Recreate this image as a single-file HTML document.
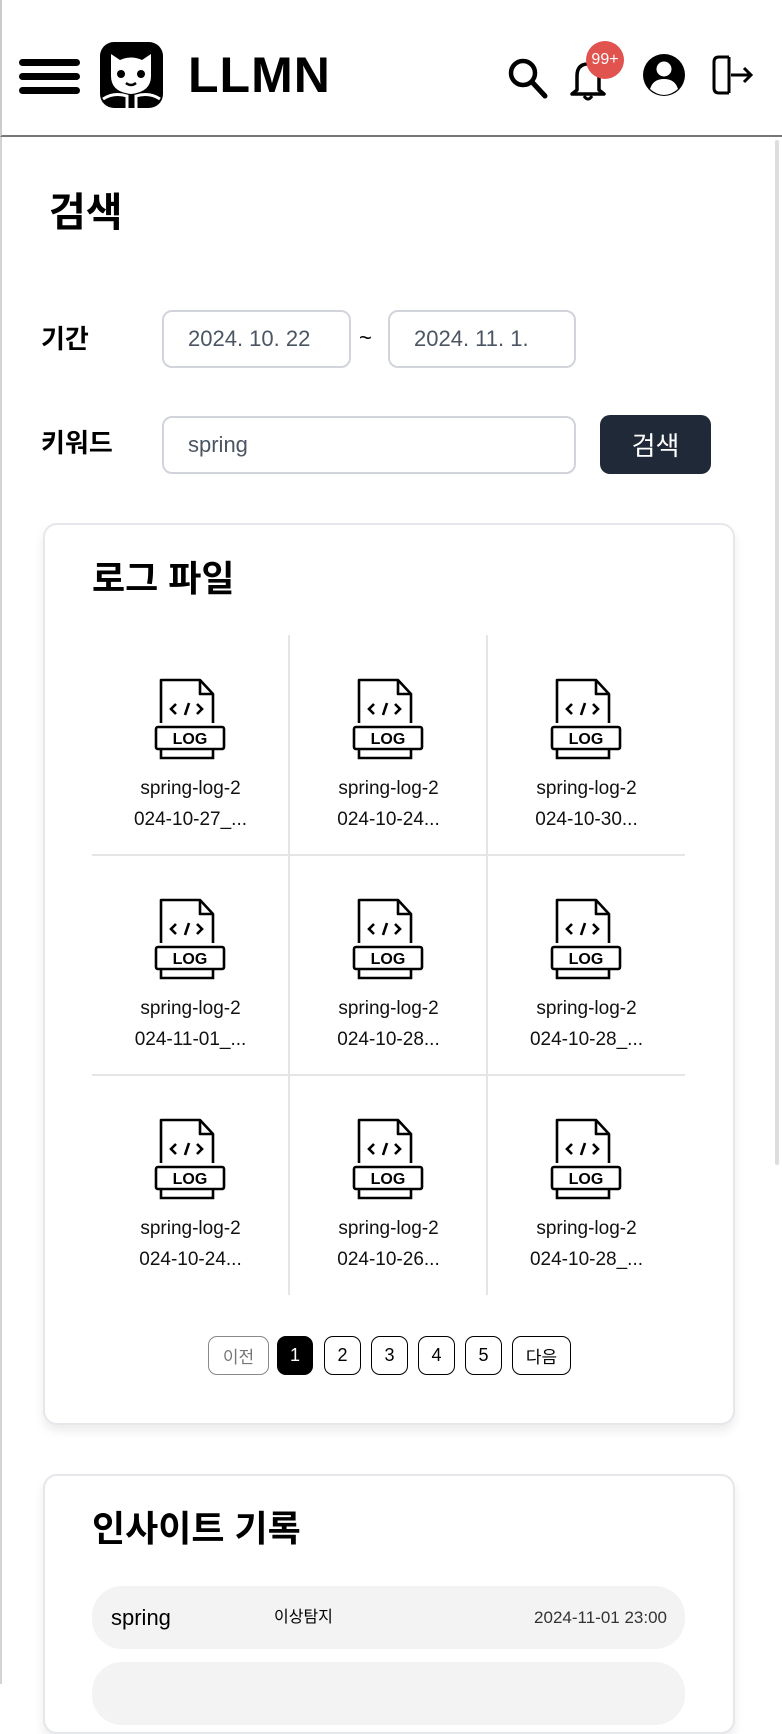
<!DOCTYPE html>
<html><head><meta charset="utf-8"><style>
*{box-sizing:border-box;margin:0;padding:0}
body{width:782px;height:1684px;overflow:hidden;background:#fff;font-family:"Liberation Sans","Noto Sans CJK KR",sans-serif;position:relative;color:#000}
.abs{position:absolute}
.hdr{position:absolute;left:0;top:0;width:782px;height:137px;border-bottom:2px solid #777;border-left:2px solid #ccc}
.lb{position:absolute;left:0;top:137px;width:2px;height:1547px;background:#d4d4d4}
.inp{position:absolute;border:2px solid #d1d5db;border-radius:10px;font-size:22px;color:#4b5563;padding-left:24px;display:flex;align-items:center;background:#fff}
.card{position:absolute;left:43px;width:692px;border:2px solid #e5e7eb;border-radius:14px;box-shadow:0 6px 10px rgba(0,0,0,.08);background:#fff}
.cell{position:absolute;width:197px;height:220px;text-align:center}
.cell svg{position:absolute;left:62px;top:42px}
.cell .t{position:absolute;left:0;width:100%;top:138px;font-size:19px;line-height:31px;color:#111}
.pg{position:absolute;top:1336px;height:39px;border:1px solid #000;border-radius:9px;font-size:18px;display:flex;align-items:center;justify-content:center;background:#fff}
</style></head><body>
<div class="hdr"></div>
<div class="lb"></div>
<div class="abs" style="left:775px;top:140px;width:4px;height:1025px;background:#ddd;border-radius:2px"></div>
<!-- hamburger -->
<div class="abs" style="left:19px;top:59px;width:61px;height:7px;background:#000;border-radius:4px"></div>
<div class="abs" style="left:19px;top:73px;width:61px;height:7px;background:#000;border-radius:4px"></div>
<div class="abs" style="left:19px;top:87px;width:61px;height:7px;background:#000;border-radius:4px"></div>
<!-- logo -->
<svg class="abs" style="left:100px;top:42px" width="63" height="66" viewBox="0 0 63 66">
<rect x="0" y="0" width="63" height="66" rx="14" fill="#000"/>
<path d="M11 12 L20 18 Q31 13 42 18 L51 12 L51 34 Q51 50 31 52 Q11 50 11 34 Z" fill="#fff"/>
<circle cx="21" cy="32" r="4" fill="#000"/><circle cx="41" cy="32" r="4" fill="#000"/>
<path d="M26 41 Q31 45 36 41" stroke="#000" stroke-width="2.5" fill="none"/>
<path d="M3 57 Q14 50 27 54 L27 66 M60 57 Q49 50 36 54 L36 66" stroke="#fff" stroke-width="3" fill="none"/>
</svg>
<div class="abs" style="left:188px;top:42px;font-size:50px;font-weight:bold;line-height:66px;letter-spacing:1px">LLMN</div>
<!-- search -->
<svg class="abs" style="left:506px;top:56px" width="44" height="44" viewBox="0 0 44 44"><circle cx="17" cy="17" r="12" stroke="#000" stroke-width="4.5" fill="none"/><path d="M26 26 L39 40" stroke="#000" stroke-width="5" stroke-linecap="round"/></svg>
<!-- bell -->
<svg class="abs" style="left:568px;top:56px" width="44" height="46" viewBox="0 0 44 46"><path d="M9 34 L9 20 Q9 8 20 8 Q31 8 31 20 L31 34 L36 38 L4 38 Z" stroke="#000" stroke-width="3.5" fill="none" stroke-linejoin="round"/><path d="M16 40 Q20 46 24 40" stroke="#000" stroke-width="3" fill="none"/></svg>
<div class="abs" style="left:586px;top:41px;width:38px;height:38px;border-radius:50%;background:#e0534f;color:#fff;font-size:16px;display:flex;align-items:center;justify-content:center">99+</div>
<!-- profile -->
<svg class="abs" style="left:641px;top:52px" width="46" height="46" viewBox="0 0 46 46"><circle cx="23" cy="23" r="21" fill="#000"/><circle cx="23" cy="17" r="7.5" fill="#fff"/><path d="M9 37 Q12 27 23 27 Q34 27 37 37 Q30 43 23 43 Q16 43 9 37 Z" fill="#fff"/></svg>
<!-- logout -->
<svg class="abs" style="left:711px;top:54px" width="44" height="42" viewBox="0 0 44 42"><path d="M18 3 L8 3 Q3 3 3 8 L3 34 Q3 39 8 39 L18 39" stroke="#000" stroke-width="3" fill="none"/><path d="M18 3 L18 39" stroke="#000" stroke-width="3"/><path d="M20 21 L40 21 M33 14 L40 21 L33 28" stroke="#000" stroke-width="3" fill="none"/></svg>

<div class="abs" style="left:49px;top:188px;font-size:40px;font-weight:bold;line-height:50px">검색</div>
<div class="abs" style="left:41px;top:323px;font-size:26px;font-weight:bold;line-height:32px">기간</div>
<div class="inp" style="left:162px;top:310px;width:189px;height:58px">2024. 10. 22</div>
<div class="abs" style="left:359px;top:325px;font-size:22px">~</div>
<div class="inp" style="left:388px;top:310px;width:188px;height:58px">2024. 11. 1.</div>
<div class="abs" style="left:41px;top:427px;font-size:26px;font-weight:bold;line-height:32px">키워드</div>
<div class="inp" style="left:162px;top:416px;width:414px;height:58px">spring</div>
<div class="abs" style="left:600px;top:415px;width:111px;height:59px;background:#1f2937;border-radius:10px;color:#fff;font-size:26px;display:flex;align-items:center;justify-content:center">검색</div>

<div class="card" style="top:523px;height:902px"></div>
<div class="abs" style="left:92px;top:556px;font-size:36px;font-weight:bold;line-height:46px">로그 파일</div>
<div class="abs" style="left:92px;top:854px;width:593px;height:2px;background:#e5e5e5"></div>
<div class="abs" style="left:92px;top:1074px;width:593px;height:2px;background:#e5e5e5"></div>
<div class="abs" style="left:288px;top:635px;width:2px;height:660px;background:#e5e5e5"></div>
<div class="abs" style="left:486px;top:635px;width:2px;height:660px;background:#e5e5e5"></div>

<svg width="0" height="0" style="position:absolute"><defs><g id="ic">
<path d="M7 46 L7 3 L46 3 L59 17 L59 46" stroke="#000" stroke-width="2.6" fill="none" stroke-linejoin="round"/>
<path d="M46 3 L46 17 L59 17" stroke="#000" stroke-width="2.6" fill="none" stroke-linejoin="round"/>
<path d="M22 27 L17 32 L22 37 M31 38 L35 26 M43 27 L48 32 L43 37" stroke="#000" stroke-width="2.6" fill="none"/>
<rect x="2" y="50" width="68" height="22" rx="2" stroke="#000" stroke-width="2.6" fill="none"/>
<path d="M7 72 L7 81 L59 81 L59 72" stroke="#000" stroke-width="2.6" fill="none"/>
<text x="36" y="67" text-anchor="middle" font-family="Liberation Sans,sans-serif" font-weight="bold" font-size="16">LOG</text>
</g></defs></svg>

<div class="cell" style="left:92px;top:635px"><svg width="72" height="84"><use href="#ic"/></svg><div class="t">spring-log-2<br>024-10-27_...</div></div>
<div class="cell" style="left:290px;top:635px"><svg width="72" height="84"><use href="#ic"/></svg><div class="t">spring-log-2<br>024-10-24...</div></div>
<div class="cell" style="left:488px;top:635px"><svg width="72" height="84"><use href="#ic"/></svg><div class="t">spring-log-2<br>024-10-30...</div></div>
<div class="cell" style="left:92px;top:855px"><svg width="72" height="84"><use href="#ic"/></svg><div class="t">spring-log-2<br>024-11-01_...</div></div>
<div class="cell" style="left:290px;top:855px"><svg width="72" height="84"><use href="#ic"/></svg><div class="t">spring-log-2<br>024-10-28...</div></div>
<div class="cell" style="left:488px;top:855px"><svg width="72" height="84"><use href="#ic"/></svg><div class="t">spring-log-2<br>024-10-28_...</div></div>
<div class="cell" style="left:92px;top:1075px"><svg width="72" height="84"><use href="#ic"/></svg><div class="t">spring-log-2<br>024-10-24...</div></div>
<div class="cell" style="left:290px;top:1075px"><svg width="72" height="84"><use href="#ic"/></svg><div class="t">spring-log-2<br>024-10-26...</div></div>
<div class="cell" style="left:488px;top:1075px"><svg width="72" height="84"><use href="#ic"/></svg><div class="t">spring-log-2<br>024-10-28_...</div></div>

<div class="pg" style="left:208px;width:61px;border-color:#888;color:#777;font-size:17px">이전</div>
<div class="pg" style="left:277px;width:36px;background:#000;color:#fff">1</div>
<div class="pg" style="left:324px;width:37px">2</div>
<div class="pg" style="left:371px;width:37px">3</div>
<div class="pg" style="left:418px;width:37px">4</div>
<div class="pg" style="left:465px;width:37px">5</div>
<div class="pg" style="left:512px;width:59px;font-size:17px">다음</div>

<div class="card" style="top:1474px;height:260px"></div>
<div class="abs" style="left:92px;top:1506px;font-size:36px;font-weight:bold;line-height:46px">인사이트 기록</div>
<div class="abs" style="left:92px;top:1586px;width:593px;height:63px;background:#f3f3f3;border-radius:30px"></div>
<div class="abs" style="left:111px;top:1604px;font-size:22px;line-height:28px">spring</div>
<div class="abs" style="left:274px;top:1607px;font-size:16px;line-height:22px">이상탐지</div>
<div class="abs" style="left:500px;top:1606px;width:167px;text-align:right;font-size:17px;line-height:24px;color:#333">2024-11-01 23:00</div>
<div class="abs" style="left:92px;top:1662px;width:593px;height:63px;background:#f3f3f3;border-radius:30px"></div>
</body></html>
